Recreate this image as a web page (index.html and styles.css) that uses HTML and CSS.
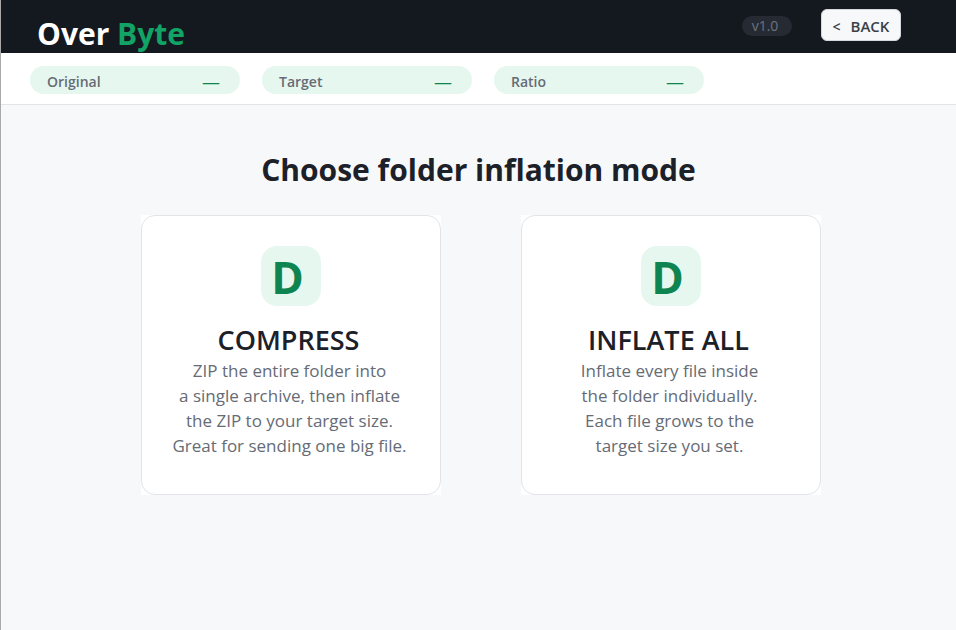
FILE: index.html
```html
<!DOCTYPE html>
<html lang="en">
<head>
    <meta charset="UTF-8">
    <meta name="viewport" content="width=device-width, initial-scale=1.0">
    <title>Over Byte</title>
    <link rel="stylesheet" href="styles.css">
</head>
<body>

<header class="header">
    <h1 class="logo">Over <span>Byte</span></h1>
    <span class="version">v1.0</span>
    <button class="back" type="button"><span class="arrow">&lt;</span>BACK</button>
</header>

<div class="stats">
    <div class="stat"><span>Original</span><span class="value">—</span></div>
    <div class="stat"><span>Target</span><span class="value">—</span></div>
    <div class="stat"><span>Ratio</span><span class="value">—</span></div>
</div>

<main>
    <h2>Choose folder inflation mode</h2>
    <div class="cards">
        <!-- Mode Cards -->
        <button class="card" type="button">
            <span class="card-body">
                <span class="card-icon">D</span>
                <span class="card-name">COMPRESS</span>
                <span class="card-text">ZIP the entire folder into<br>a single archive, then inflate<br>the ZIP to your target size.<br>Great for sending one big file.</span>
            </span>
        </button>
        <button class="card" type="button">
            <span class="card-body">
                <span class="card-icon">D</span>
                <span class="card-name">INFLATE ALL</span>
                <span class="card-text">Inflate every file inside<br>the folder individually.<br>Each file grows to the<br>target size you set.</span>
            </span>
        </button>
    </div>
</main>

</body>
</html>
```

FILE: styles.css
```css
* {
    box-sizing: border-box;
}

body {
    position: relative;
    margin: 0;
    min-height: 100vh;
    border-left: 1px solid #a9a9a9;
    background-color: #f7f8fa;
    color: #1c2028;
    font-family: "Segoe UI", "Open Sans", "Noto Sans", sans-serif;
}

/* green part of the window edge */
body::before {
    content: "";
    position: absolute;
    left: -1px;
    top: 49px;
    width: 1px;
    height: 66px;
    background-color: #4c9e78;
}

h1, h2 {
    margin: 0;
    font-weight: bold;
}

button {
    font-family: inherit;
    cursor: pointer;
}

.header {
    display: flex;
    align-items: flex-start;
    height: 53px;
    padding: 9px 55px 0 36px;
    background-color: #14181f;
}

.logo {
    margin-right: auto;
    color: white;
    font-size: 30px;
    line-height: 50px;
}

.logo span {
    color: #12a366;
}

.version {
    width: 50px;
    height: 20px;
    margin-top: 7px;
    margin-right: 29px;
    padding-right: 4px;
    border-radius: 10px;
    background-color: #262a32;
    color: #6b7280;
    font-size: 14px;
    line-height: 20px;
    text-align: center;
}

.back {
    width: 80px;
    height: 32px;
    padding: 2px 0 0;
    border: 1px solid #d5d8de;
    border-radius: 6px;
    background-color: #f7f8fa;
    color: #3a3f47;
    font-size: 15px;
    font-weight: 600;
}

.arrow {
    margin-right: 10px;
    font-size: 14px;
}

.stats {
    display: flex;
    gap: 22px;
    height: 52px;
    padding: 13px 29px 0;
    border-bottom: 1px solid #e2e4e9;
    background-color: white;
}

.stat {
    display: flex;
    justify-content: space-between;
    width: 210px;
    height: 28px;
    padding: 0 20px 0 17px;
    border-radius: 14px;
    background-color: #e6f7ef;
    color: #666b75;
    font-size: 14px;
    font-weight: 600;
    line-height: 32px;
}

.value {
    color: #0e8450;
    font-size: 18px;
    font-weight: 400;
}

main {
    padding: 43px 0;
}

h2 {
    font-size: 30px;
    line-height: 44px;
    text-align: center;
}

.cards {
    display: flex;
    justify-content: center;
    flex-wrap: wrap;
    gap: 80px;
    margin-top: 23px;
    padding-left: 4px;
}

.card {
    width: 300px;
    padding: 0;
    border: none;
    background-color: white;
}

.card-body {
    display: flex;
    flex-direction: column;
    align-items: center;
    min-height: 280px;
    padding: 30px 0;
    border: 1px solid #e2e4e9;
    border-radius: 14px;
}

.card-icon {
    width: 60px;
    height: 60px;
    padding-right: 6px;
    border-radius: 16px;
    background-color: #e6f7ef;
    color: #0e8450;
    font-size: 44px;
    font-weight: bold;
    line-height: 62px;
}

.card-name {
    margin-top: 16px;
    padding-right: 4px;
    color: #1c2028;
    font-size: 27px;
    font-weight: 600;
    line-height: 36px;
}

.card-text {
    padding-right: 2px;
    color: #666b75;
    font-size: 17px;
    line-height: 25px;
}
```
